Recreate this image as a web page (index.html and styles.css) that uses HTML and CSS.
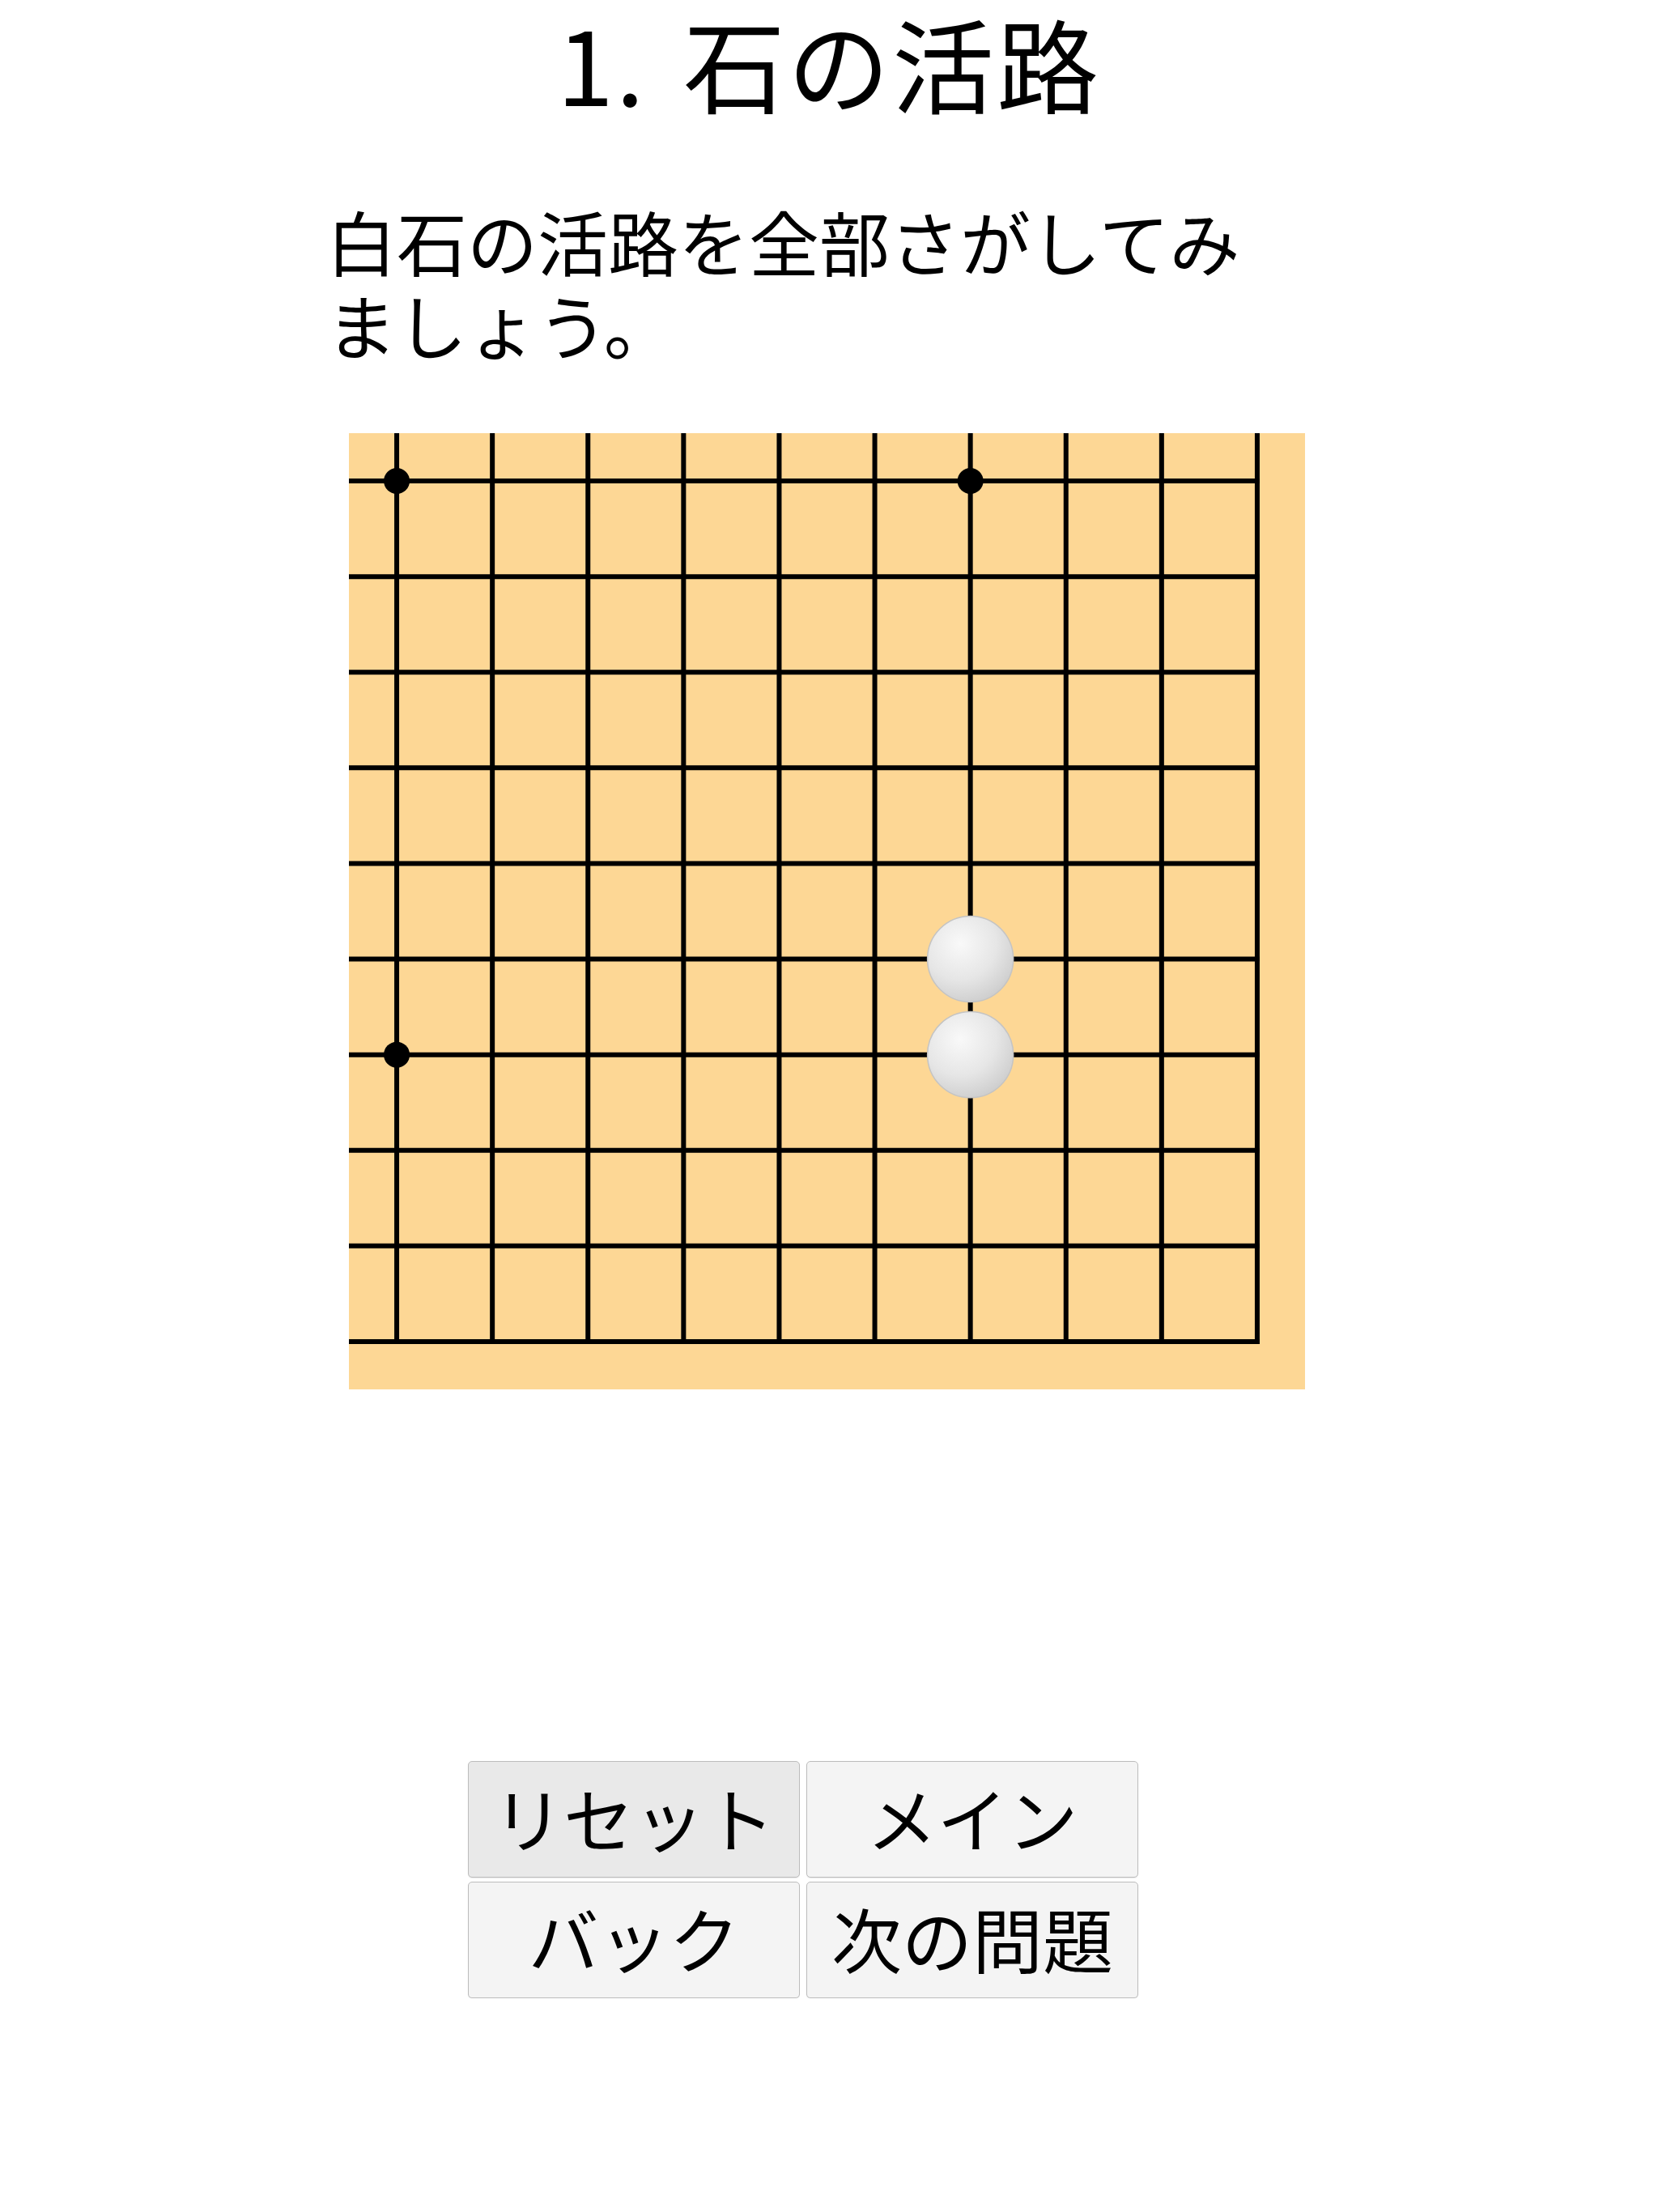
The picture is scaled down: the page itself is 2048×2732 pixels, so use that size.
FILE: index.html
```html
<!DOCTYPE html>
<html lang="ja">
<head>
  <meta charset="UTF-8">
  <meta name="viewport" content="width=device-width, initial-scale=1.0">
  <title>1. 石の活路</title>
  <link rel="stylesheet" href="styles.css">
</head>
<body>
  <h1 class="title">1. 石の活路</h1>
  <p class="prompt">白石の活路を全部さがしてみましょう。</p>

  <!-- bottom-right corner of a 19x19 board, 10x10 points -->
  <div class="board">
    <svg width="1181" height="1181" viewBox="0 0 1180 1180">
      <defs>
        <radialGradient id="whiteStone" cx="0.38" cy="0.32" r="0.7">
          <stop offset="0" stop-color="#f9f9f9"/>
          <stop offset="0.6" stop-color="#e6e6e6"/>
          <stop offset="1" stop-color="#cfcfcf"/>
        </radialGradient>
      </defs>
      <g class="grid" stroke="#000" stroke-width="6" stroke-linecap="square">
        <path d="M0 59H1121 M0 177H1121 M0 295H1121 M0 413H1121 M0 531H1121 M0 649H1121 M0 767H1121 M0 885H1121 M0 1003H1121 M0 1121H1121"/>
        <path d="M59 0V1121 M177 0V1121 M295 0V1121 M413 0V1121 M531 0V1121 M649 0V1121 M767 0V1121 M885 0V1121 M1003 0V1121 M1121 0V1121"/>
      </g>
      <g class="hoshi" fill="#000">
        <circle cx="59" cy="59" r="16"/>
        <circle cx="767" cy="59" r="16"/>
        <circle cx="59" cy="767" r="16"/>
        <circle cx="767" cy="767" r="16"/>
      </g>
      <g class="stones" fill="url(#whiteStone)" stroke="#c4c4c4" stroke-width="1.5">
        <circle cx="767" cy="649" r="53"/>
        <circle cx="767" cy="767" r="53"/>
      </g>
    </svg>
  </div>

  <div class="controls">
    <button class="btn active">リセット</button>
    <button class="btn">メイン</button>
    <button class="btn">バック</button>
    <button class="btn">次の問題</button>
  </div>
</body>
</html>
```

FILE: styles.css
```css
/* General */
body {
  margin: 0;
  padding-top: 1px;
  background: #fff;
  color: #000;
  font-family: "Noto Sans CJK JP", "Noto Sans", sans-serif;
}

/* Title */
.title {
  margin: 0;
  font-size: 126px;
  font-weight: normal;
  line-height: 150px;
  letter-spacing: 3px;
  word-spacing: 14px;
  text-align: center;
}

/* Question text */
.prompt {
  width: 1160px;
  margin: 95px 0 0 403px;
  font-size: 87px;
  line-height: 103px;
}

/* Board */
.board {
  width: 1181px;
  height: 1181px;
  margin: 83px 0 0 431px;
  background-color: #fdd795;
}

.board svg {
  display: block;
}

/* Buttons */
.controls {
  display: grid;
  grid-template-columns: repeat(2, 410px);
  gap: 5px 8px;
  justify-content: center;
  padding-right: 64px;
  margin-top: 459px;
}

.btn {
  height: 144px;
  padding: 0 0 6px;
  font-family: "Noto Sans CJK JP", "Noto Sans", sans-serif;
  font-size: 87px;
  color: #000;
  background-color: #f4f4f4;
  border: 1px solid #bcbcbc;
  border-radius: 5px;
  box-shadow: 0 1px 1px rgba(0, 0, 0, 0.08);
}

.btn.active {
  background-color: #e9e9e9;
}
```
